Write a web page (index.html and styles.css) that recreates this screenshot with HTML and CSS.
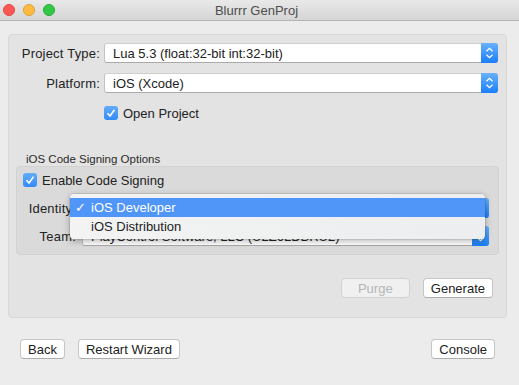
FILE: index.html
```html
<!DOCTYPE html>
<html lang="en">

<head>
  <meta charset="UTF-8">
  <meta name="viewport" content="width=device-width, initial-scale=1.0">
  <title>Blurrr GenProj</title>
  <link rel="stylesheet" href="styles.css">
</head>

<body>
  <div class="titlebar">
    <div class="lights">
      <span class="light red"></span>
      <span class="light yellow"></span>
      <span class="light green"></span>
    </div>
    <div class="title">Blurrr GenProj</div>
    <div></div>
  </div>

  <div class="window">
    <div class="panel">
      <div class="row">
        <span class="label">Project Type:</span>
        <div class="select">
          <span class="select-text">Lua 5.3 (float:32-bit int:32-bit)</span>
          <span class="stepper"><svg width="17" height="20" viewBox="0 0 17 20"><path d="M5.5 8.3 L8.5 5.3 L11.5 8.3 M5.5 11.7 L8.5 14.7 L11.5 11.7" fill="none" stroke="#fff" stroke-width="1.3"/></svg></span>
        </div>
      </div>
      <div class="row">
        <span class="label">Platform:</span>
        <div class="select">
          <span class="select-text">iOS (Xcode)</span>
          <span class="stepper"><svg width="17" height="20" viewBox="0 0 17 20"><path d="M5.5 8.3 L8.5 5.3 L11.5 8.3 M5.5 11.7 L8.5 14.7 L11.5 11.7" fill="none" stroke="#fff" stroke-width="1.3"/></svg></span>
        </div>
      </div>
      <div class="row check-row indent">
        <span class="check"><svg width="14" height="14" viewBox="0 0 14 14"><path d="M3.5 7.3 L6 10 L10.5 3.8" fill="none" stroke="#fff" stroke-width="1.6"/></svg></span>
        <span>Open Project</span>
      </div>

      <div class="section-title">iOS Code Signing Options</div>
      <div class="group">
        <div class="row check-row">
          <span class="check"><svg width="14" height="14" viewBox="0 0 14 14"><path d="M3.5 7.3 L6 10 L10.5 3.8" fill="none" stroke="#fff" stroke-width="1.6"/></svg></span>
          <span>Enable Code Signing</span>
        </div>
        <div class="row sub">
          <span class="label">Identity:</span>
          <div class="select">
            <span class="select-text">iOS Developer</span>
            <span class="stepper"><svg width="17" height="20" viewBox="0 0 17 20"><path d="M5.5 8.3 L8.5 5.3 L11.5 8.3 M5.5 11.7 L8.5 14.7 L11.5 11.7" fill="none" stroke="#fff" stroke-width="1.3"/></svg></span>
          </div>
        </div>
        <div class="row sub">
          <span class="label">Team:</span>
          <div class="select">
            <span class="select-text">PlayControl Software, LLC (U2Z6LDBRU2)</span>
            <span class="stepper"><svg width="17" height="20" viewBox="0 0 17 20"><path d="M5.5 8.3 L8.5 5.3 L11.5 8.3 M5.5 11.7 L8.5 14.7 L11.5 11.7" fill="none" stroke="#fff" stroke-width="1.3"/></svg></span>
          </div>
        </div>

        <div class="menu">
          <div class="menu-item selected"><span class="tick">✓</span>iOS Developer</div>
          <div class="menu-item"><span class="tick"></span>iOS Distribution</div>
        </div>
      </div>

      <div class="actions">
        <button class="btn purge" disabled>Purge</button>
        <button class="btn">Generate</button>
      </div>
    </div>

    <div class="footer">
      <div class="footer-left">
        <button class="btn">Back</button>
        <button class="btn">Restart Wizard</button>
      </div>
      <button class="btn">Console</button>
    </div>
  </div>
</body>

</html>
```

FILE: styles.css
```css
body {
  font-family: 'Liberation Sans', Arial, sans-serif;
  font-size: 13px;
  color: #222;
  background: #ececec;
  margin: 0;
  padding: 0;
  width: 519px;
  height: 385px;
  overflow: hidden;
}

.titlebar {
  display: grid;
  grid-template-columns: 1fr auto 1fr;
  align-items: center;
  height: 20px;
  background: linear-gradient(to bottom, #e9e9e9, #d5d5d5);
  border-bottom: 1px solid #b5b5b5;
}

.lights {
  display: flex;
  gap: 8px;
  padding-left: 3px;
}

.light {
  width: 12px;
  height: 12px;
  border-radius: 50%;
  box-sizing: border-box;
}

.red {
  background: #fc5753;
  border: 1px solid #df4744;
}

.yellow {
  background: #fdbc40;
  border: 1px solid #de9f34;
}

.green {
  background: #33c748;
  border: 1px solid #27aa35;
}

.title {
  color: #4d4d4d;
  font-size: 13px;
  padding-right: 6px;
}

.window {
  padding-top: 13px;
}

.panel {
  box-sizing: border-box;
  margin: 0 12px 0 8px;
  height: 284px;
  padding: 8px 7px 0 7px;
  background: #e3e3e3;
  border: 1px solid #d8d8d8;
  border-radius: 4px;
}

.row {
  display: flex;
  align-items: center;
  height: 20px;
  margin-bottom: 10px;
}

.label {
  width: 84px;
  margin-right: 4px;
  text-align: right;
  flex-shrink: 0;
  letter-spacing: 0.2px;
}

.select {
  flex: 1;
  display: flex;
  align-items: center;
  height: 20px;
  box-sizing: border-box;
  margin-right: 1px;
  background: #fff;
  border: 1px solid #c3c3c3;
  border-top-color: #cfcfcf;
  border-bottom-color: #aaa;
  border-radius: 3px;
}

.select-text {
  flex: 1;
  padding-left: 8px;
  white-space: nowrap;
  overflow: hidden;
}

.stepper {
  width: 17px;
  height: 20px;
  margin: -1px -1px -1px 0;
  display: flex;
  border-radius: 0 3px 3px 0;
  background: linear-gradient(to bottom, #69b1fa, #1a7ffa);
}

.check-row {
  gap: 5px;
}

.indent {
  padding-left: 88px;
}

.check {
  width: 14px;
  height: 14px;
  display: flex;
  border-radius: 3px;
  background: linear-gradient(to bottom, #62acfa, #3389f7);
}

.section-title {
  font-size: 11.5px;
  line-height: 13px;
  padding-left: 10px;
  margin-top: 30px;
  color: #2a2a2a;
}

.group {
  position: relative;
  box-sizing: border-box;
  height: 89px;
  padding: 3px 8px 0 6px;
  background: #dadada;
  border: 1px solid #d2d2d2;
  border-radius: 4px;
}

.group .row {
  margin-bottom: 0;
}

.group .sub {
  margin-top: 8px;
}

.group .sub .label {
  width: 53px;
  margin-right: 6px;
}

.menu {
  position: absolute;
  left: 53px;
  top: 27px;
  width: 415px;
  height: 45px;
  box-sizing: border-box;
  padding-top: 4px;
  background: linear-gradient(to right, #f3f3f3, #eceeef);
  border-radius: 4px;
  box-shadow: 0 2px 7px rgba(0, 0, 0, 0.3), 0 0 0 1px rgba(0, 0, 0, 0.07);
}

.menu-item {
  display: flex;
  align-items: center;
  height: 18px;
  color: #222;
}

.menu-item.selected {
  background: #5096f8;
  color: #fff;
  height: 19px;
}

.tick {
  width: 21px;
  padding-left: 5px;
  box-sizing: border-box;
}

.actions {
  display: flex;
  justify-content: flex-end;
  gap: 13px;
  margin-top: 23px;
  padding-right: 6px;
}

.btn {
  font-family: inherit;
  font-size: 13px;
  color: #222;
  height: 20px;
  padding: 0 7px;
  background: #fff;
  border: 1px solid #c6c6c6;
  border-bottom-color: #adadad;
  border-radius: 4px;
  line-height: 17px;
}

.purge {
  min-width: 69px;
  color: #b5b5b5;
  background: #f0f0f0;
  border-color: #d2d2d2;
}

.footer {
  display: flex;
  justify-content: space-between;
  margin-top: 21px;
  padding: 0 24px 0 20px;
}

.footer-left {
  display: flex;
  gap: 13px;
}
```
